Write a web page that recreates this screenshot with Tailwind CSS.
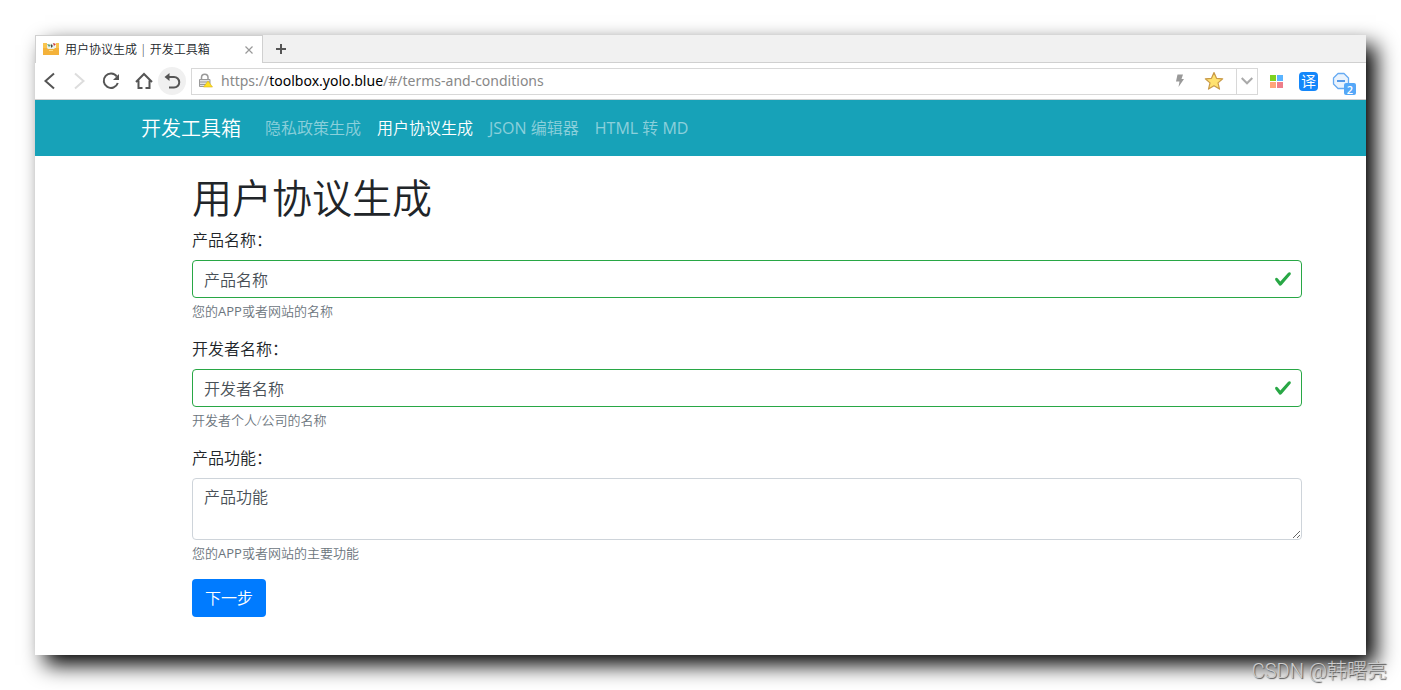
<!DOCTYPE html>
<html lang="zh-CN">
<head>
<meta charset="utf-8">
<meta name="viewport" content="width=device-width, initial-scale=1">
<title>用户协议生成 | 开发工具箱</title>
<script src="https://cdn.jsdelivr.net/npm/@tailwindcss/browser@4"></script>
</head>
<body class="relative min-h-screen overflow-hidden bg-white p-[35px] font-['Open_Sans','Noto_Sans_CJK_SC',sans-serif] text-base font-[350] text-[#212529]">
<div class="flex min-h-[620px] flex-col bg-white shadow-[10px_10px_20px_#000]">
  <header>
    <div class="flex h-7 border-b border-[#d0d0d0] bg-[#f1f1f1]">
      <div class="flex h-7 w-[228px] items-center border-x border-t border-[#d0d0d0] bg-white pr-[7px] pl-[7px]">
        <svg class="size-4 shrink-0" viewBox="0 0 16 16" aria-hidden="true"><path d="M0 1h4v6H0zM13 1h3v6h-3z" fill="#f9c54f"/><path d="M4 2l8-1 1 6H4z" fill="#e9f1ea"/><path d="M4 2l4 1-2 2z" fill="#5f9e7e"/><path d="M10 1l3 1-2 2z" fill="#d33d3d"/><path d="M8 2l2 2-2 2z" fill="#444"/><path d="M0 6h4l1 1h6l1-1h4v7H0z" fill="#f4b23a"/><path d="M6 8h4v1H6z" fill="#ffdc83"/></svg>
        <span class="ml-1.5 flex-1 text-xs whitespace-nowrap">用户协议生成 | 开发工具箱</span>
        <button type="button" aria-label="关闭标签页" class="flex size-3 items-center justify-center"><svg class="size-2" viewBox="0 0 8 8" fill="none" stroke="#999" stroke-width="1.200"><path d="M.5.5l7 7M7.500.5l-7 7"/></svg></button>
      </div>
      <button type="button" aria-label="新标签页" class="flex w-9 items-center justify-center"><svg class="size-3" viewBox="0 0 12 12" fill="none" stroke="#555" stroke-width="2"><path d="M6 1v10M1 6h10"/></svg></button>
    </div>
    <div class="flex h-[37px] items-center border-b border-[#d0d0d0] pr-2.5">
      <button type="button" aria-label="后退" class="flex size-7 items-center justify-center"><svg class="size-5" viewBox="0 0 20 20" fill="none" stroke="#555" stroke-width="2"><path d="M15 2.500L6.500 10l8.500 7.500"/></svg></button>
      <button type="button" aria-label="前进" class="ml-0.5 flex size-7 items-center justify-center"><svg class="size-5" viewBox="0 0 20 20" fill="none" stroke="#ddd" stroke-width="2"><path d="M6 2.500l8.500 7.500L6 17.500"/></svg></button>
      <button type="button" aria-label="刷新" class="ml-1 flex size-7 items-center justify-center"><svg class="size-5" viewBox="0 0 20 20" fill="none" stroke="#555" stroke-width="2"><path d="M15.800 5.500A7.200 7.200 0 1 0 16.800 12"/><path d="M18 3v6h-6z" fill="#555" stroke="none"/></svg></button>
      <button type="button" aria-label="主页" class="ml-[5px] flex size-7 items-center justify-center"><svg class="size-5" viewBox="0 0 20 20" fill="none" stroke="#555" stroke-width="2"><path d="M2 11l8-8 8 8M4.500 9.500V17h4M15.500 9.500V17h-4"/></svg></button>
      <button type="button" aria-label="恢复" class="flex size-7 items-center justify-center rounded-full bg-[#f0f0f0]"><svg class="size-5" viewBox="0 0 20 20" fill="none" stroke="#555" stroke-width="2"><path d="M4.500 6H12a5 5 0 0 1 0 10.500H7"/><path d="M7.500 2v8L2.500 6z" fill="#555" stroke="none"/></svg></button>
      <div class="ml-[5px] flex h-[27px] flex-1 items-center border border-[#d8d8d8]">
        <svg class="ml-1.5 size-4 shrink-0" viewBox="0 0 16 16" aria-hidden="true"><path d="M3.500 7V4.500a3.200 3.200 0 0 1 6.500 0V7" fill="none" stroke="#999" stroke-width="1.500"/><path d="M1.500 6.500h10.500v7h-10.500zM1.500 9h10.500M1.500 11.500h10.500" fill="#e2e2e2" stroke="#999"/><path d="M10 8l4.500 6H5.500z" fill="#ffe11f" stroke="#d9b020" stroke-width=".6"/></svg>
        <a href="#/terms-and-conditions" class="ml-[7px] flex-1 font-['Noto_Sans',sans-serif] text-sm font-normal whitespace-nowrap text-[#888]">https://<span class="text-black">toolbox.yolo.blue</span>/#/terms-and-conditions</a>
        <button type="button" aria-label="极速模式" class="mr-3.5 flex size-5 items-center justify-center"><svg class="size-4" viewBox="0 0 16 16" fill="#999"><path d="M5.500 1.500H11L9.500 6H12L6.500 14l1-5.500H4z"/></svg></button>
        <button type="button" aria-label="收藏" class="mr-3 flex size-5 items-center justify-center"><svg class="size-5" viewBox="0 0 20 20"><path d="M10 1.500l2.500 5.800 6.200.5-4.700 4.100 1.500 6.200L10 14.800l-5.500 3.300L6 11.900 1.300 7.800l6.200-.5z" fill="#ffe26f" stroke="#c99a48" stroke-width="1.200" stroke-linejoin="round"/></svg></button>
        <button type="button" aria-label="展开地址" class="flex h-full w-[21px] items-center justify-center border-l border-[#d8d8d8]"><svg class="h-2 w-3" viewBox="0 0 12 8" fill="none" stroke="#aaa" stroke-width="2"><path d="M.7 1L6 6.300 11.300 1"/></svg></button>
      </div>
      <button type="button" aria-label="扩展中心" class="ml-[7px] flex size-[22px] items-center justify-center"><svg class="size-[13px]" viewBox="0 0 13 13"><path d="M0 0h6v6H0z" fill="#7ed321"/><path d="M7 0h6v6H7z" fill="#5ab4ff"/><path d="M0 7h6v6H0z" fill="#ffa57a"/><path d="M7 7h6v6H7z" fill="#ee7e8a"/></svg></button>
      <button type="button" aria-label="翻译" class="ml-3 flex size-[19px] items-center justify-center rounded bg-[#1487fa] text-[15px] leading-none text-white">译</button>
      <button type="button" aria-label="拦截 2" class="relative ml-3.5 size-6"><svg class="size-6" viewBox="0 0 24 24"><path d="M6 4.500h6l4.500 4.500v6L12 19.500H6L1.500 15V9z" fill="#eaf3fd" stroke="#66aaf2" stroke-width="1.300" stroke-linejoin="round"/><path d="M5 12h8" stroke="#5599e8" stroke-width="2"/></svg><span class="absolute right-0 -bottom-0.5 flex size-3 items-center justify-center rounded-xs bg-[#55a8f8] text-[11px] leading-none font-semibold text-white">2</span></button>
    </div>
  </header>
  <nav class="flex h-14 items-center bg-[#17a2b8] pl-[106px] whitespace-nowrap text-white/50">
    <a href="#/" class="mr-4 pt-0.5 text-xl text-white">开发工具箱</a>
    <a href="#/privacy-policy" class="px-2">隐私政策生成</a>
    <a href="#/terms-and-conditions" class="px-2 text-white">用户协议生成</a>
    <a href="#/json-editor" class="px-2"><span class="font-normal">JSON</span> 编辑器</a>
    <a href="#/html-to-md" class="px-2"><span class="font-normal">HTML</span> 转 <span class="font-normal">MD</span></a>
  </nav>
  <main class="pt-[18px] pr-16 pb-9 pl-[157px]">
    <h1 class="mb-1.5 text-[40px] leading-[48px]">用户协议生成</h1>
    <form>
      <div class="mb-4">
        <label for="product" class="mb-2 block leading-6">产品名称：</label>
        <div class="relative"><input id="product" type="text" placeholder="产品名称" class="block h-[38px] w-full rounded border border-[#28a745] px-[11px] pt-0.5 placeholder:text-[#495057]"><svg class="pointer-events-none absolute top-2.5 right-2.5 h-[18px] w-[18px]" viewBox="0 0 8 8" aria-hidden="true"><path fill="#28a745" d="M2.300 6.730L.6 4.530c-.4-1.040.46-1.400 1.100-.8l1.100 1.400 3.400-3.800c.6-.63 1.600-.27 1.200.7l-4 4.600c-.43.5-.8.4-1.100.1z"/></svg></div>
        <small class="mt-1 block text-[13px] leading-[19px] text-[#6c757d]">您的<span class="font-normal">APP</span>或者网站的名称</small>
      </div>
      <div class="mb-4">
        <label for="developer" class="mb-2 block leading-6">开发者名称：</label>
        <div class="relative"><input id="developer" type="text" placeholder="开发者名称" class="block h-[38px] w-full rounded border border-[#28a745] px-[11px] pt-0.5 placeholder:text-[#495057]"><svg class="pointer-events-none absolute top-2.5 right-2.5 h-[18px] w-[18px]" viewBox="0 0 8 8" aria-hidden="true"><path fill="#28a745" d="M2.300 6.730L.6 4.530c-.4-1.040.46-1.400 1.100-.8l1.100 1.400 3.400-3.800c.6-.63 1.600-.27 1.200.7l-4 4.600c-.43.5-.8.4-1.100.1z"/></svg></div>
        <small class="mt-1 block text-[13px] leading-[19px] text-[#6c757d]">开发者个人/公司的名称</small>
      </div>
      <div class="mb-4">
        <label for="features" class="mb-2 block leading-6">产品功能：</label>
        <textarea id="features" rows="2" placeholder="产品功能" class="block h-[62px] w-full resize rounded border border-[#ced4da] px-[11px] py-1.5 placeholder:text-[#495057]"></textarea>
        <small class="mt-1 block text-[13px] leading-[19px] text-[#6c757d]">您的<span class="font-normal">APP</span>或者网站的主要功能</small>
      </div>
      <button type="submit" class="h-[38px] rounded bg-[#007bff] px-[13px] text-white">下一步</button>
    </form>
  </main>
</div>
<p class="absolute right-3.5 bottom-1 font-['Roboto','Noto_Sans_CJK_SC',sans-serif] text-xl leading-[30px] font-light text-[#ccc] [text-shadow:1px_1px_1px_#555]">CSDN @韩曙亮</p>
</body>
</html>
